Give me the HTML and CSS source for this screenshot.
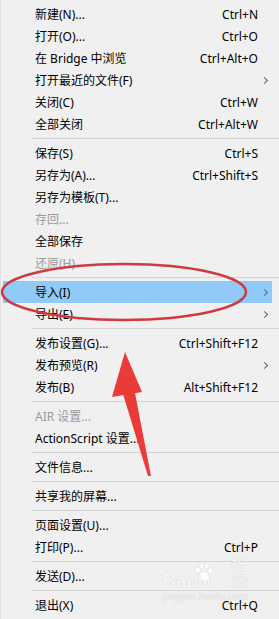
FILE: index.html
```html
<!DOCTYPE html>
<html lang="zh-CN">
<head>
    <meta charset="UTF-8">
    <meta name="viewport" content="width=device-width, initial-scale=1.0">
    <title>文件菜单</title>
    <link rel="stylesheet" href="styles.css">
</head>
<body>
    <ul class="menu">
        <li class="item"><span class="label">新建(N)...</span><span class="key">Ctrl+N</span></li>
        <li class="item"><span class="label">打开(O)...</span><span class="key">Ctrl+O</span></li>
        <li class="item"><span class="label">在 Bridge 中浏览</span><span class="key">Ctrl+Alt+O</span></li>
        <li class="item sub"><span class="label">打开最近的文件(F)</span><span class="key"></span><span class="arrow"></span></li>
        <li class="item"><span class="label">关闭(C)</span><span class="key">Ctrl+W</span></li>
        <li class="item"><span class="label">全部关闭</span><span class="key">Ctrl+Alt+W</span></li>
        <li class="sep"></li>
        <li class="item"><span class="label">保存(S)</span><span class="key">Ctrl+S</span></li>
        <li class="item"><span class="label">另存为(A)...</span><span class="key">Ctrl+Shift+S</span></li>
        <li class="item"><span class="label">另存为模板(T)...</span></li>
        <li class="item disabled"><span class="label">存回...</span></li>
        <li class="item"><span class="label">全部保存</span></li>
        <li class="item disabled"><span class="label">还原(H)</span></li>
        <li class="sep"></li>
        <li class="item sub active"><span class="label">导入(I)</span><span class="key"></span><span class="arrow"></span></li>
        <li class="item sub"><span class="label">导出(E)</span><span class="key"></span><span class="arrow"></span></li>
        <li class="sep"></li>
        <li class="item"><span class="label">发布设置(G)...</span><span class="key">Ctrl+Shift+F12</span></li>
        <li class="item sub"><span class="label">发布预览(R)</span><span class="key"></span><span class="arrow"></span></li>
        <li class="item"><span class="label">发布(B)</span><span class="key">Alt+Shift+F12</span></li>
        <li class="sep"></li>
        <li class="item disabled"><span class="label">AIR 设置...</span></li>
        <li class="item"><span class="label">ActionScript 设置...</span></li>
        <li class="sep"></li>
        <li class="item"><span class="label">文件信息...</span></li>
        <li class="sep"></li>
        <li class="item"><span class="label">共享我的屏幕...</span></li>
        <li class="sep"></li>
        <li class="item"><span class="label">页面设置(U)...</span></li>
        <li class="item"><span class="label">打印(P)...</span><span class="key">Ctrl+P</span></li>
        <li class="sep"></li>
        <li class="item"><span class="label">发送(D)...</span></li>
        <li class="sep"></li>
        <li class="item"><span class="label">退出(X)</span><span class="key">Ctrl+Q</span></li>
    </ul>

    <!-- annotation drawn over the screenshot -->
    <svg class="marks" width="279" height="619" viewBox="0 0 279 619">
        <ellipse cx="124" cy="292" rx="122" ry="28" fill="none" stroke="#cf3a40" stroke-width="2.5"/>
        <polygon points="125,352 112,397 142,392" fill="#ea3b3b"/>
        <polygon points="123,394 135,393 151,476 148,476" fill="#ea3b3b"/>
    </svg>

    <div class="watermark">
        <div class="wm-logo">
            <span class="wm-bai">Bai</span>
            <svg class="wm-paw" width="26" height="26" viewBox="0 0 26 26">
                <ellipse cx="6" cy="9" rx="3" ry="3.6"/>
                <ellipse cx="11" cy="4" rx="3" ry="3.6"/>
                <ellipse cx="17" cy="4" rx="3" ry="3.6"/>
                <ellipse cx="21.5" cy="10" rx="3" ry="3.6"/>
                <path d="M13 11 C8 11 5 18 6 22 C7 25 11 24 13 23 C15 24 19 25 20 22 C21 18 18 11 13 11 Z"/>
            </svg>
            <span class="wm-du">du</span>
            <span class="wm-jy">经验</span>
        </div>
        <div class="wm-url">jingyan.baidu.com</div>
    </div>
</body>
</html>
```

FILE: styles.css
```css
/* Windows style popup menu */
body {
    margin: 0;
    padding: 0;
    background-color: #f0f0f0;
    font-family: "Noto Sans", "Noto Sans CJK SC", sans-serif;
    font-size: 12px;
    color: #000;
    width: 279px;
    height: 619px;
    overflow: hidden;
    position: relative;
}

.menu {
    list-style: none;
    margin: 0;
    padding: 3px 0 0 0;
    border-left: 1px solid #e2e2e2;
    height: 100%;
    box-sizing: border-box;
}

.item {
    display: grid;
    grid-template-columns: 1fr auto 14px;
    align-items: center;
    height: 22px;
    margin: 0 7px 0 2px;
    padding-left: 32px;
    white-space: nowrap;
}

.item .label {
    grid-column: 1;
}

.item .key {
    grid-column: 2;
    text-align: right;
}

.item .arrow {
    grid-column: 3;
    justify-self: center;
    width: 4px;
    height: 4px;
    border-top: 1px solid #666;
    border-right: 1px solid #666;
    transform: rotate(45deg);
    margin-left: -2px;
}

.item.disabled {
    color: #9b9b9b;
}

.item.active {
    background-color: #91c9f7;
}

.sep {
    height: 7px;
    margin-left: 31px;
    padding-top: 3px;
    box-sizing: border-box;
}

.sep::before {
    content: "";
    display: block;
    border-top: 1px solid #d5d5d5;
}

.marks {
    position: absolute;
    left: 0;
    top: 0;
    pointer-events: none;
}

/* baidu watermark */
.watermark {
    position: absolute;
    left: 162px;
    top: 560px;
    width: 96px;
    color: rgba(255, 255, 255, 0.85);
    text-shadow: 0 0 1px rgba(0, 0, 0, 0.2);
    pointer-events: none;
}

.wm-logo {
    display: flex;
    align-items: flex-end;
    height: 30px;
    font-family: "Liberation Sans", sans-serif;
    font-weight: bold;
}

.wm-bai {
    font-size: 19px;
    line-height: 19px;
}

.wm-paw {
    fill: rgba(255, 255, 255, 0.85);
    stroke: rgba(0, 0, 0, 0.12);
    stroke-width: 0.6;
    margin: 0 -20px 0 1px;
    align-self: flex-start;
}

.wm-du {
    font-size: 14px;
    line-height: 15px;
    margin-right: 6px;
}

.wm-jy {
    font-family: "Noto Sans CJK SC", sans-serif;
    font-size: 17px;
    line-height: 19px;
    font-weight: normal;
    margin-left: 14px;
}

.wm-url {
    font-size: 10px;
    line-height: 11px;
    margin-top: 1px;
    color: rgba(255, 255, 255, 0.7);
}
```
